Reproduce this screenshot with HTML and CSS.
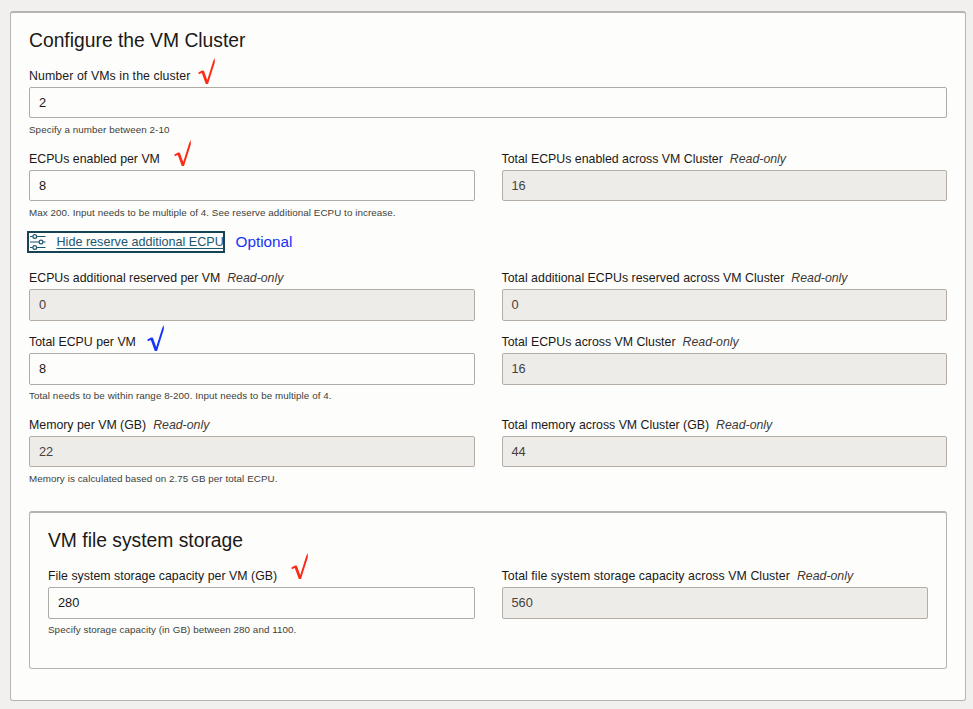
FILE: index.html
```html
<!DOCTYPE html>
<html lang="en">
<head>
<meta charset="utf-8">
<title>Configure the VM Cluster</title>
<link rel="stylesheet" href="styles.css">
</head>
<body>
<svg class="defs" aria-hidden="true">
  <symbol id="check" viewBox="0 0 18 28"><path d="M0.4 14.6 L4 12.6 L5.9 12.8 L9.2 22 L15.2 3 L16.8 0 L16.8 4.4 L10 26 L7.8 26 L3.8 15 L0.8 16.2 Z" fill="currentColor"/></symbol>
</svg>
<main class="panel">
  <h1 class="title">Configure the VM Cluster</h1>
  <div class="field">
    <div class="label"><span class="spaced">Number of VMs in the cluster</span><svg class="mark mark-vms"><use href="#check"/></svg></div>
    <div class="input">2</div>
    <div class="hint">Specify a number between 2-10</div>
  </div>
  <div class="row">
    <div class="field">
      <div class="label"><span>ECPUs enabled per VM</span><svg class="mark mark-enabled"><use href="#check"/></svg></div>
      <div class="input">8</div>
      <div class="hint">Max 200. Input needs to be multiple of 4. See reserve additional ECPU to increase.</div>
    </div>
    <div class="field">
      <div class="label"><span>Total ECPUs enabled across VM Cluster</span><em>Read-only</em></div>
      <div class="input readonly">16</div>
    </div>
  </div>
  <div class="toggle-row">
    <a class="toggle">
      <svg class="sliders" viewBox="0 0 16 16" fill="none" stroke="currentColor" stroke-width="1.2"><path d="M0 2.5H2.6M7 2.5H15.5M0 8H8.8M13.2 8H15.5M0 13.5H2.6M7 13.5H15.5"/><circle cx="4.8" cy="2.5" r="1.9"/><circle cx="11" cy="8" r="1.9"/><circle cx="4.8" cy="13.5" r="1.9"/></svg>
      <span>Hide reserve additional ECPU</span>
    </a>
    <span class="optional">Optional</span>
  </div>
  <div class="row">
    <div class="field">
      <div class="label"><span>ECPUs additional reserved per VM</span><em>Read-only</em></div>
      <div class="input readonly">0</div>
    </div>
    <div class="field">
      <div class="label"><span class="wide-label">Total additional ECPUs reserved across VM Cluster</span><em>Read-only</em></div>
      <div class="input readonly">0</div>
    </div>
  </div>
  <div class="row">
    <div class="field">
      <div class="label"><span>Total ECPU per VM</span><svg class="mark mark-total"><use href="#check"/></svg></div>
      <div class="input">8</div>
      <div class="hint">Total needs to be within range 8-200. Input needs to be multiple of 4.</div>
    </div>
    <div class="field">
      <div class="label"><span>Total ECPUs across VM Cluster</span><em>Read-only</em></div>
      <div class="input readonly">16</div>
    </div>
  </div>
  <div class="row">
    <div class="field">
      <div class="label"><span>Memory per VM (GB)</span><em>Read-only</em></div>
      <div class="input readonly">22</div>
      <div class="hint">Memory is calculated based on 2.75 GB per total ECPU.</div>
    </div>
    <div class="field">
      <div class="label"><span>Total memory across VM Cluster (GB)</span><em>Read-only</em></div>
      <div class="input readonly">44</div>
    </div>
  </div>
  <section class="panel storage">
    <h2 class="title">VM file system storage</h2>
    <div class="row">
      <div class="field">
        <div class="label"><span class="wide-label">File system storage capacity per VM (GB)</span><svg class="mark mark-storage"><use href="#check"/></svg></div>
        <div class="input">280</div>
        <div class="hint">Specify storage capacity (in GB) between 280 and 1100.</div>
      </div>
      <div class="field">
        <div class="label"><span class="storage-label">Total file system storage capacity across VM Cluster</span><em>Read-only</em></div>
        <div class="input readonly">560</div>
      </div>
    </div>
  </section>
</main>
</body>
</html>
```
FILE: styles.css
```css
* { box-sizing: border-box; }
body {
  margin: 0;
  padding: 11px 7px 8px 10px;
  background: #f1f0ee;
  color: #1b1917;
  font: 12.33px/17px "Liberation Sans", Arial, sans-serif;
}
.defs { display: none; }
.panel {
  height: 690px;
  padding: 0 18px;
  border: 1px solid #b7b3ae;
  border-top-width: 2px;
  border-radius: 3px;
  background: #fdfdfb;
}
.title {
  height: 55px;
  margin: 0;
  padding-top: 15px;
  font-size: 19.3px;
  font-weight: 400;
  line-height: 25px;
}
.row {
  display: grid;
  grid-template-columns: 1fr 1fr;
  column-gap: 27px;
}
.field { min-width: 0; padding-bottom: 13.67px; }
.field:has(.hint) { padding-bottom: 0; }
.label {
  display: flex;
  position: relative;
  height: 19px;
  white-space: nowrap;
}
.label em { margin-left: 7px; color: #3d3a37; }
.spaced { letter-spacing: 0.09px; }
.wide-label { letter-spacing: 0.025px; }
.storage-label { letter-spacing: 0.065px; }
.input {
  height: 31.33px;
  padding: 0 9px;
  border: 1px solid #aeaaa5;
  border-radius: 2px;
  background: #fdfdfb;
  font-size: 12.8px;
  line-height: 30px;
}
.readonly { background: #eeece9; color: #45423f; border-color: #b3ada5; }
.hint {
  height: 32.5px;
  padding-top: 0.38px;
  color: #403d3a;
  font-size: 9.8px;
  letter-spacing: 0.075px;
  line-height: 22px;
  white-space: nowrap;
}
.mark { position: absolute; width: 18px; height: 28px; color: #fb2b17; }
.mark-vms { left: 169px; top: -10px; }
.mark-enabled { left: 145px; top: -11px; }
.mark-total { left: 118px; top: -9px; color: #1633ff; }
.mark-storage { left: 243px; top: -15px; }
.toggle-row {
  display: flex;
  height: 36.25px;
  margin: -2.67px 0 3px -2px;
}
.toggle {
  display: flex;
  align-items: center;
  width: 198px;
  height: 22px;
  padding-left: 1px;
  border: 2px solid #174355;
  color: #1c5570;
  font-size: 12.6px;
  white-space: nowrap;
}
.toggle span {
  margin-left: 10.5px;
  text-decoration: underline;
  text-underline-offset: 2px;
  text-decoration-thickness: 1px;
}
.sliders { flex: none; width: 16px; height: 16px; }
.optional { margin-left: 10.5px; color: #1633f5; font-size: 15.3px; line-height: 22px; }
.storage { height: 157.75px; margin-top: 11.33px; }
```
